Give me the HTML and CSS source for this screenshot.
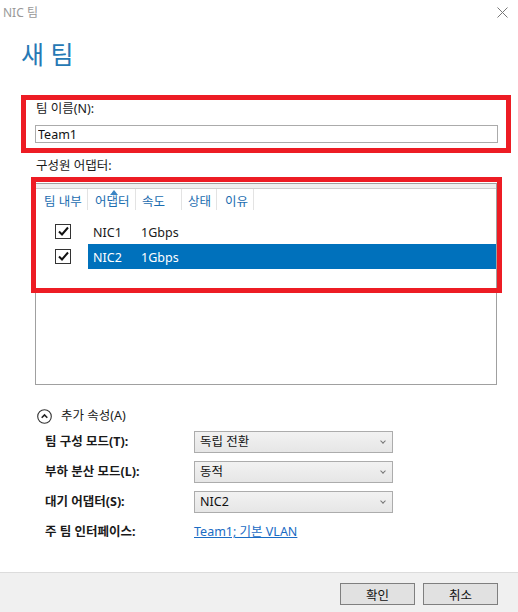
FILE: index.html
```html
<!DOCTYPE html>
<html lang="ko">
<head>
  <meta charset="UTF-8" />
  <title>NIC 팀</title>
  <link rel="stylesheet" href="styles.css">
</head>
<body>
  <div class="dialog">
    <div class="titlebar">
      <span class="title">NIC 팀</span>
      <svg class="close" width="11" height="11" viewBox="0 0 11 11">
        <path d="M0.5 0.5 L10.5 10.5 M10.5 0.5 L0.5 10.5" stroke="#777" stroke-width="1" fill="none"/>
      </svg>
    </div>

    <h1 class="page-title">새 팀</h1>

    <div class="main">
      <div class="field-label">팀 이름(N):</div>
      <input class="name-input" type="text" value="Team1">

      <div class="field-label members-label">구성원 어댑터:</div>
      <div class="adapter-list">
        <div class="list-strip"></div>
        <div class="list-header">
          <div class="col col-team">팀 내부</div>
          <div class="col col-name">어댑터<span class="sort-arrow"></span></div>
          <div class="col col-speed">속도</div>
          <div class="col col-state">상태</div>
          <div class="col col-reason">이유</div>
        </div>
        <div class="list-row">
          <div class="cell-check"><span class="checkbox"><svg width="13" height="13" viewBox="0 0 13 13"><path d="M2 6.5 L5 9.5 L11 2.5" stroke="#111" stroke-width="2" fill="none"/></svg></span></div>
          <div class="cell-name">NIC1</div>
          <div class="cell-speed">1Gbps</div>
        </div>
        <div class="list-row selected">
          <div class="cell-check"><span class="checkbox"><svg width="13" height="13" viewBox="0 0 13 13"><path d="M2 6.5 L5 9.5 L11 2.5" stroke="#111" stroke-width="2" fill="none"/></svg></span></div>
          <div class="cell-name">NIC2</div>
          <div class="cell-speed">1Gbps</div>
        </div>
      </div>

      <div class="more-toggle">
        <svg width="15" height="15" viewBox="0 0 15 15">
          <circle cx="7.5" cy="7.5" r="6.8" stroke="#333" stroke-width="1.1" fill="none"/>
          <path d="M4.7 8.8 L7.5 6 L10.3 8.8" stroke="#222" stroke-width="1.6" fill="none"/>
        </svg>
        <span>추가 속성(A)</span>
      </div>

      <div class="props">
        <div class="prop-label">팀 구성 모드(T):</div>
        <div class="select">독립 전환<span class="chev"></span></div>

        <div class="prop-label">부하 분산 모드(L):</div>
        <div class="select">동적<span class="chev"></span></div>

        <div class="prop-label">대기 어댑터(S):</div>
        <div class="select">NIC2<span class="chev"></span></div>

        <div class="prop-label">주 팀 인터페이스:</div>
        <div class="prop-link"><a href="#">Team1; 기본 VLAN</a></div>
      </div>
    </div>

    <div class="footer">
      <button class="btn">확인</button>
      <button class="btn">취소</button>
    </div>

    <!-- red annotation frames -->
    <div class="mark mark-name"></div>
    <div class="mark mark-list"></div>
  </div>
</body>
</html>
```

FILE: styles.css
```css
body {
  margin: 0;
  background: white;
  font-family: "Noto Sans", "Noto Sans CJK KR", sans-serif;
  font-size: 12.5px;
  color: #1a1a1a;
}

.dialog {
  position: relative;
  width: 518px;
  height: 612px;
  display: flex;
  flex-direction: column;
  background: white;
}

.titlebar {
  height: 26px;
  display: flex;
  align-items: center;
  justify-content: space-between;
  padding: 0 10px 0 3px;
  flex-shrink: 0;
}

.title {
  color: #999;
  font-size: 12px;
  line-height: 26px;
}

.close {
  margin-top: -2px;
}

.page-title {
  margin: 11px 0 0 0;
  padding-left: 21px;
  font-size: 25px;
  font-weight: normal;
  line-height: 34px;
  color: #2679b4;
}

.main {
  flex: 1;
  padding: 0 20px 0 35px;
}

.field-label {
  margin-top: 30px;
  line-height: 16px;
  padding-left: 1px;
}

.members-label {
  margin-top: 15px;
}

.name-input {
  display: block;
  box-sizing: border-box;
  width: 463px;
  height: 18px;
  margin: 8px 0 0 0;
  padding: 0 2px;
  border: 1px solid #ababab;
  font-family: inherit;
  font-size: 12.5px;
  color: #111;
  outline: none;
}

.adapter-list {
  box-sizing: border-box;
  width: 462px;
  height: 202px;
  margin-top: 9px;
  border: 1px solid #a0a0a0;
}

.list-strip {
  height: 4px;
  background: #f0f0f0;
  border-bottom: 1px solid #cfcfcf;
}

.list-header {
  display: flex;
  height: 21px;
  margin-bottom: 9px;
}

.col {
  position: relative;
  box-sizing: border-box;
  padding-left: 7px;
  line-height: 26px;
  color: #1c6db0;
  border-right: 1px solid #e3e3e3;
}

.col-team { width: 52px; padding-left: 8px; }
.col-name { width: 48px; }
.col-speed { width: 46px; padding-left: 6px; }
.col-state { width: 35px; padding-left: 6px; }
.col-reason { width: 37px; padding-left: 8px; }

.sort-arrow {
  position: absolute;
  left: 22px;
  top: 1px;
  width: 0;
  height: 0;
  border-left: 4px solid transparent;
  border-right: 4px solid transparent;
  border-bottom: 5px solid #3a84c4;
}

.list-row {
  display: flex;
  height: 25px;
  line-height: 27px;
}

.cell-check {
  width: 52px;
  display: flex;
  align-items: center;
  padding-left: 19px;
  box-sizing: border-box;
  background: white;
}

.checkbox {
  box-sizing: border-box;
  width: 16px;
  height: 15px;
  border: 1px solid #333;
  background: white;
  display: flex;
  align-items: center;
  justify-content: center;
}

.cell-name {
  width: 48px;
  padding-left: 5px;
  box-sizing: border-box;
}

.cell-speed {
  flex: 1;
  padding-left: 5px;
}

.list-row.selected .cell-name,
.list-row.selected .cell-speed {
  background: #0071bc;
  color: white;
}

.more-toggle {
  display: flex;
  align-items: center;
  gap: 9px;
  margin-top: 23px;
  padding-left: 2px;
  height: 16px;
  line-height: 16px;
}

.props {
  display: grid;
  grid-template-columns: 149px 199px;
  grid-auto-rows: 22px;
  row-gap: 8px;
  margin-top: 7px;
  padding-left: 10px;
}

.prop-label {
  font-weight: bold;
  line-height: 22px;
}

.select {
  position: relative;
  box-sizing: border-box;
  border: 1px solid #acacac;
  background: linear-gradient(#f2f2f2, #e6e6e6);
  padding-left: 5px;
  line-height: 20px;
  color: #111;
}

.chev {
  position: absolute;
  right: 7px;
  top: 7px;
  width: 3px;
  height: 3px;
  border-right: 1px solid #777;
  border-bottom: 1px solid #777;
  transform: rotate(45deg);
}

.prop-link {
  line-height: 22px;
}

.prop-link a {
  color: #1a6cc4;
  text-decoration: underline;
}

.footer {
  height: 40px;
  box-sizing: border-box;
  flex-shrink: 0;
  border-top: 1px solid #dcdcdc;
  background: #f0f0f0;
  display: flex;
  justify-content: flex-end;
  gap: 8px;
  padding: 10px 20px 0 0;
}

.btn {
  width: 75px;
  height: 22px;
  background: #e1e1e1;
  border: 1px solid #7f7f7f;
  font-family: inherit;
  font-size: 12.5px;
  color: #111;
  padding: 0;
}

.mark {
  position: absolute;
  box-sizing: border-box;
  border: 5px solid #ed1c24;
}

.mark-name {
  left: 21px;
  top: 95px;
  width: 490px;
  height: 58px;
}

.mark-list {
  left: 31px;
  top: 177px;
  width: 471px;
  height: 116px;
}
```
